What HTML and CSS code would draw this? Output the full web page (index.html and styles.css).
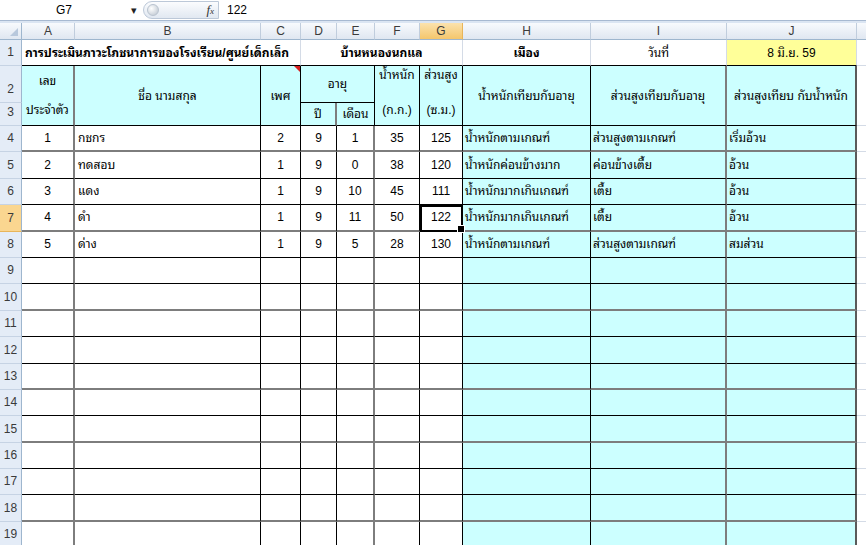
FILE: index.html
```html
<!DOCTYPE html>
<html lang="th">
<head>
<meta charset="utf-8">
<title>Sheet</title>
<link rel="stylesheet" href="styles.css">
</head>
<body>
<div class="fbar">
  <div class="namebox"><span class="name">G7</span><span class="arrow">▾</span></div>
  <div class="pill"><span class="knob"></span><span class="fx">f<span class="fxsub">x</span></span></div>
  <div class="formula">122</div>
</div>
<div class="band"></div>
<table class="sheet">
  <colgroup>
    <col class="w-rh"><col class="w-a"><col class="w-b"><col class="w-c"><col class="w-d"><col class="w-e"><col class="w-f"><col class="w-g"><col class="w-h"><col class="w-i"><col class="w-j"><col class="w-k">
  </colgroup>
  <thead>
    <tr class="colhead">
      <th class="corner"></th><th>A</th><th>B</th><th>C</th><th>D</th><th>E</th><th>F</th><th class="act">G</th><th>H</th><th>I</th><th>J</th><th class="kh"></th>
    </tr>
  </thead>
  <tbody>
    <tr class="r1">
      <th class="rh">1</th>
      <td colspan="3" class="title">การประเมินภาวะโภชนาการของโรงเรียน/ศูนย์เด็กเล็ก</td>
      <td colspan="4" class="b ctr">บ้านหนองนกแล</td>
      <td class="b ctr">เมือง</td>
      <td class="ctr">วันที่</td>
      <td class="ctr date">8 มิ.ย. 59</td>
      <td class="k"></td>
    </tr>
    <tr class="r2">
      <th class="rh">2</th>
      <td class="h top-a gr">เลข</td>
      <td rowspan="2" class="h mid">ชื่อ นามสกุล</td>
      <td rowspan="2" class="h mid cm">เพศ</td>
      <td colspan="2" class="h mid">อายุ</td>
      <td class="h top-f">น้ำหนัก</td>
      <td class="h top-f">ส่วนสูง</td>
      <td rowspan="2" class="h mid">น้ำหนักเทียบกับอายุ</td>
      <td rowspan="2" class="h mid gr">ส่วนสูงเทียบกับอายุ</td>
      <td rowspan="2" class="h mid last">ส่วนสูงเทียบ กับน้ำหนัก</td>
      <td class="k nb"></td>
    </tr>
    <tr class="r3">
      <th class="rh">3</th>
      <td class="h r3t gr bb">ประจำตัว</td>
      <td class="h mid gr bb">ปี</td>
      <td class="h mid bb">เดือน</td>
      <td class="h r3t bb">(ก.ก.)</td>
      <td class="h r3t bb">(ซ.ม.)</td>
      <td class="k"></td>
    </tr>
    <tr class="d g"><th class="rh">4</th><td>1</td><td>กชกร</td><td>2</td><td>9</td><td>1</td><td>35</td><td>125</td><td>น้ำหนักตามเกณฑ์</td><td>ส่วนสูงตามเกณฑ์</td><td>เริ่มอ้วน</td><td></td></tr>
    <tr class="d"><th class="rh">5</th><td>2</td><td>ทดสอบ</td><td>1</td><td>9</td><td>0</td><td>38</td><td>120</td><td>น้ำหนักค่อนข้างมาก</td><td>ค่อนข้างเตี้ย</td><td>อ้วน</td><td></td></tr>
    <tr class="d"><th class="rh">6</th><td>3</td><td>แดง</td><td>1</td><td>9</td><td>10</td><td>45</td><td>111</td><td>น้ำหนักมากเกินเกณฑ์</td><td>เตี้ย</td><td>อ้วน</td><td></td></tr>
    <tr class="d g"><th class="rh act">7</th><td>4</td><td>ดำ</td><td>1</td><td>9</td><td>11</td><td>50</td><td class="sel">122</td><td>น้ำหนักมากเกินเกณฑ์</td><td>เตี้ย</td><td>อ้วน</td><td></td></tr>
    <tr class="d"><th class="rh">8</th><td>5</td><td>ด่าง</td><td>1</td><td>9</td><td>5</td><td>28</td><td>130</td><td>น้ำหนักตามเกณฑ์</td><td>ส่วนสูงตามเกณฑ์</td><td>สมส่วน</td><td></td></tr>
    <tr class="d"><th class="rh">9</th><td></td><td></td><td></td><td></td><td></td><td></td><td></td><td></td><td></td><td></td><td></td></tr>
    <tr class="d g"><th class="rh">10</th><td></td><td></td><td></td><td></td><td></td><td></td><td></td><td></td><td></td><td></td><td></td></tr>
    <tr class="d"><th class="rh">11</th><td></td><td></td><td></td><td></td><td></td><td></td><td></td><td></td><td></td><td></td><td></td></tr>
    <tr class="d"><th class="rh">12</th><td></td><td></td><td></td><td></td><td></td><td></td><td></td><td></td><td></td><td></td><td></td></tr>
    <tr class="d g"><th class="rh">13</th><td></td><td></td><td></td><td></td><td></td><td></td><td></td><td></td><td></td><td></td><td></td></tr>
    <tr class="d"><th class="rh">14</th><td></td><td></td><td></td><td></td><td></td><td></td><td></td><td></td><td></td><td></td><td></td></tr>
    <tr class="d g"><th class="rh">15</th><td></td><td></td><td></td><td></td><td></td><td></td><td></td><td></td><td></td><td></td><td></td></tr>
    <tr class="d"><th class="rh">16</th><td></td><td></td><td></td><td></td><td></td><td></td><td></td><td></td><td></td><td></td><td></td></tr>
    <tr class="d"><th class="rh">17</th><td></td><td></td><td></td><td></td><td></td><td></td><td></td><td></td><td></td><td></td><td></td></tr>
    <tr class="d g"><th class="rh">18</th><td></td><td></td><td></td><td></td><td></td><td></td><td></td><td></td><td></td><td></td><td></td></tr>
    <tr class="d"><th class="rh">19</th><td></td><td></td><td></td><td></td><td></td><td></td><td></td><td></td><td></td><td></td><td></td></tr>
  </tbody>
</table>
</body>
</html>
```
FILE: styles.css
```css
* { box-sizing: border-box; }
html, body { margin: 0; padding: 0; }
body {
  width: 866px;
  height: 545px;
  overflow: hidden;
  background: #fff;
  color: #000;
  font-family: "Liberation Sans", "Tahoma", "Noto Sans Thai Looped", "Loma", "Garuda", "Norasi", "Noto Sans Thai", "Noto Sans", sans-serif;
  font-size: 12px;
}

/* formula bar */
.fbar {
  display: flex;
  align-items: center;
  height: 21px;
  border-bottom: 1px solid #a7b9d1;
  background: #fff;
  font-size: 12px;
}
.namebox { width: 140px; display: flex; align-items: center; }
.namebox .name { width: 128px; text-align: center; }
.namebox .arrow { width: 12px; text-align: center; font-size: 11px; color: #222; }
.pill {
  width: 76px;
  height: 18px;
  margin-left: 3px;
  display: flex;
  align-items: center;
  justify-content: space-between;
  padding: 0 4px 0 3px;
  border: 1px solid #bcc8d8;
  border-radius: 9px 0 0 9px;
  background: linear-gradient(#fbfcfe, #e1e8f1);
}
.knob {
  width: 12px;
  height: 12px;
  border-radius: 50%;
  border: 1px solid #b9c3cf;
  background: radial-gradient(circle at 35% 35%, #ffffff, #b9c2cd);
}
.fx { font-family: "Liberation Serif", serif; font-style: italic; font-size: 13px; color: #333; }
.fxsub { font-size: 9px; }
.formula { padding-left: 8px; }
.band { height: 2px; background: #dbe5f2; }

/* sheet */
.sheet {
  border-collapse: separate;
  border-spacing: 0;
  table-layout: fixed;
  width: 866px;
}
.w-rh { width: 22px; }
.w-a { width: 53px; }
.w-b { width: 186px; }
.w-c { width: 40px; }
.w-d { width: 36px; }
.w-e { width: 38px; }
.w-f { width: 45px; }
.w-g { width: 43px; }
.w-h { width: 128px; }
.w-i { width: 136px; }
.w-j { width: 130px; }
.w-k { width: 9px; }

td, th { padding: 0; line-height: 14px; white-space: nowrap; }

.colhead th {
  height: 17px;
  font-weight: normal;
  font-size: 12px;
  color: #3b3b3b;
  text-align: center;
  vertical-align: middle;
  background: linear-gradient(#f8fafd, #e0e7f1);
  border-right: 1px solid #c0cddd;
  border-bottom: 1px solid #9eb6ce;
}
.colhead th.act { background: linear-gradient(#fbe2ad, #f4c66c); border-right-color: #e8b55a; }
.colhead th.corner { position: relative; border-right-color: #9eb6ce; }
.colhead th.corner::after {
  content: "";
  position: absolute;
  right: 3px;
  bottom: 3px;
  border-bottom: 8px solid #b8c8dc;
  border-left: 8px solid transparent;
}
.colhead th.kh { border-right: none; }

th.rh {
  font-weight: normal;
  font-size: 12px;
  color: #3a3a3a;
  text-align: center;
  vertical-align: bottom;
  padding-bottom: 6px;
  background: #e4ecf7;
  border-right: 1px solid #9eb6ce;
  border-bottom: 1px solid #c6d3e4;
}
th.rh.act { background: #fad690; border-bottom-color: #e8b55a; }

/* row 1 */
.r1 { height: 26px; }
.r1 td {
  vertical-align: middle;
  border-right: 1px solid #d4dbe6;
  border-bottom: 1px solid #000;
}
.r1 td.k { border-bottom-color: #d4dbe6; border-right: none; }
.title { font-weight: bold; padding-left: 3px; overflow: visible; }
.b { font-weight: bold; }
.ctr { text-align: center; }
.date { background: #ffff99; }

/* header rows 2-3 */
.r2 { height: 37px; }
.r3 { height: 23px; }
td.h {
  background: #ccffff;
  text-align: center;
  border-right: 1px solid #000;
}
td.mid { vertical-align: middle; border-bottom: 1px solid #000; }
td.h.bb { border-bottom: 1px solid #000; }
td.top-a { vertical-align: top; padding-top: 8px; }
td.top-f { vertical-align: top; padding-top: 2px; }
td.r3t { vertical-align: top; padding-top: 0; }
td.gr { border-right: 2px solid #7d7d7d; }
td.last { border-right: 2px solid #5a5a5a; }
td.cm { position: relative; }
td.cm::after {
  content: "";
  position: absolute;
  top: 0;
  right: 0;
  border-top: 6px solid #d81e1e;
  border-left: 6px solid transparent;
}
td.k { border-bottom: 1px solid #d4dbe6; }
td.k.nb { border-bottom: none; }

/* data rows */
tr.d { height: 26.4px; }
tr.d td {
  vertical-align: middle;
  text-align: center;
  border-right: 1px solid #000;
  border-bottom: 1px solid #000;
}
tr.d.g td { border-bottom: 2px solid #7d7d7d; }
tr.d td:nth-child(3) { text-align: left; padding-left: 3px; }
tr.d td:nth-child(2) { border-right: 2px solid #7d7d7d; }
tr.d td:nth-child(6) { border-right: 2px solid #7d7d7d; }
tr.d td:nth-child(9),
tr.d td:nth-child(10),
tr.d td:nth-child(11) { background: #ccffff; text-align: left; padding-left: 2px; }
tr.d td:nth-child(10) { border-right: 2px solid #7d7d7d; }
tr.d td:nth-child(11) { border-right: 2px solid #5a5a5a; }
tr.d td:nth-child(12) { border-right: none; border-bottom: 1px solid #d4dbe6; }

td.sel { position: relative; outline: 2px solid #000; outline-offset: -2px; }
td.sel::after {
  content: "";
  position: absolute;
  right: -3px;
  bottom: -3px;
  width: 6px;
  height: 6px;
  background: #000;
  border: 1px solid #fff;
}
```
